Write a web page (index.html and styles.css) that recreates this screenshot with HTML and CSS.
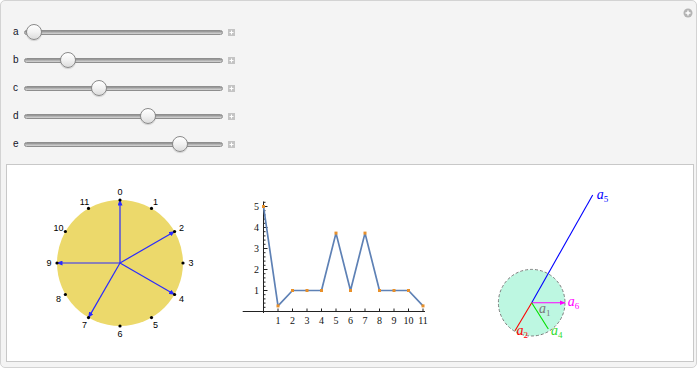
FILE: index.html
```html
<!DOCTYPE html>
<html>
<head>
<meta charset="utf-8">
<link rel="stylesheet" href="styles.css">
</head>
<body>
<div class="manipulate">
  <svg class="opts" width="10" height="10" viewBox="0 0 10 10"><circle cx="5" cy="5" r="4.5" fill="#b4b4b4"/><path d="M5 2.5v5M2.5 5h5" stroke="#fff" stroke-width="1.4"/></svg>
  <div class="controls">
    <div class="row"><span class="lbl">a</span><div class="slider"><div class="track"></div><div class="thumb" style="left:2px"></div></div><svg class="plus" width="7" height="7" viewBox="0 0 7 7"><rect width="7" height="7" fill="#c4c4c4"/><path d="M3.5 1.5v4M1.5 3.5h4" stroke="#fff" stroke-width="1"/></svg></div>
    <div class="row"><span class="lbl">b</span><div class="slider"><div class="track"></div><div class="thumb" style="left:36px"></div></div><svg class="plus" width="7" height="7" viewBox="0 0 7 7"><rect width="7" height="7" fill="#c4c4c4"/><path d="M3.5 1.5v4M1.5 3.5h4" stroke="#fff" stroke-width="1"/></svg></div>
    <div class="row"><span class="lbl">c</span><div class="slider"><div class="track"></div><div class="thumb" style="left:67px"></div></div><svg class="plus" width="7" height="7" viewBox="0 0 7 7"><rect width="7" height="7" fill="#c4c4c4"/><path d="M3.5 1.5v4M1.5 3.5h4" stroke="#fff" stroke-width="1"/></svg></div>
    <div class="row"><span class="lbl">d</span><div class="slider"><div class="track"></div><div class="thumb" style="left:116px"></div></div><svg class="plus" width="7" height="7" viewBox="0 0 7 7"><rect width="7" height="7" fill="#c4c4c4"/><path d="M3.5 1.5v4M1.5 3.5h4" stroke="#fff" stroke-width="1"/></svg></div>
    <div class="row"><span class="lbl">e</span><div class="slider"><div class="track"></div><div class="thumb" style="left:148px"></div></div><svg class="plus" width="7" height="7" viewBox="0 0 7 7"><rect width="7" height="7" fill="#c4c4c4"/><path d="M3.5 1.5v4M1.5 3.5h4" stroke="#fff" stroke-width="1"/></svg></div>
  </div>
  <div class="output">
    <svg class="clock" width="160" height="160" viewBox="0 0 160 160">
      <defs>
        <marker id="ah" markerWidth="6" markerHeight="5" refX="5.5" refY="2.5" orient="auto" markerUnits="userSpaceOnUse">
          <path d="M0 0L6 2.5L0 5z" fill="#2a2aff"/>
        </marker>
      </defs>
      <circle cx="80" cy="83" r="63" fill="#ecd96b"/>
      <g stroke="#2a2aff" stroke-width="1.2" marker-end="url(#ah)">
        <line x1="80" y1="83" x2="80" y2="20"/>
        <line x1="80" y1="83" x2="134.6" y2="51.5"/>
        <line x1="80" y1="83" x2="134.6" y2="114.5"/>
        <line x1="80" y1="83" x2="48.5" y2="137.6"/>
        <line x1="80" y1="83" x2="17" y2="83"/>
      </g>
      <g fill="#000">
        <circle cx="80" cy="20" r="1.6"/><circle cx="111.5" cy="28.4" r="1.6"/><circle cx="134.6" cy="51.5" r="1.6"/>
        <circle cx="143" cy="83" r="1.6"/><circle cx="134.6" cy="114.5" r="1.6"/><circle cx="111.5" cy="137.6" r="1.6"/>
        <circle cx="80" cy="146" r="1.6"/><circle cx="48.5" cy="137.6" r="1.6"/><circle cx="25.4" cy="114.5" r="1.6"/>
        <circle cx="17" cy="83" r="1.6"/><circle cx="25.4" cy="51.5" r="1.6"/><circle cx="48.5" cy="28.4" r="1.6"/>
      </g>
      <g class="clk" text-anchor="middle" dominant-baseline="central">
        <text x="80" y="12">0</text><text x="115.5" y="21.5">1</text><text x="141.5" y="47.5">2</text>
        <text x="151" y="83">3</text><text x="141.5" y="118.5">4</text><text x="115.5" y="144.5">5</text>
        <text x="80" y="154">6</text><text x="44.5" y="144.5">7</text><text x="18.5" y="118.5">8</text>
        <text x="9" y="83">9</text><text x="18.5" y="47.5">10</text><text x="44.5" y="21.5">11</text>
      </g>
    </svg>
    <svg class="plot" width="200" height="160" viewBox="0 0 200 160">
      <g stroke="#222" stroke-width="1" fill="none">
        <line x1="7.7" y1="131.5" x2="190" y2="131.5"/>
        <line x1="28.5" y1="21.5" x2="28.5" y2="133"/>
        <path d="M28.5 110.5h4M28.5 89.5h4M28.5 68.5h4M28.5 47.5h4M28.5 26.5h4"/>
        <path d="M28.5 127.3h2M28.5 123.1h2M28.5 118.9h2M28.5 114.7h2M28.5 106.3h2M28.5 102.1h2M28.5 97.9h2M28.5 93.7h2M28.5 85.3h2M28.5 81.1h2M28.5 76.9h2M28.5 72.7h2M28.5 64.3h2M28.5 60.1h2M28.5 55.9h2M28.5 51.7h2M28.5 43.3h2M28.5 39.1h2M28.5 34.9h2M28.5 30.7h2M28.5 22.3h2"/>
        <path d="M43 131.5v-3M57.5 131.5v-3M72 131.5v-3M86.5 131.5v-3M101 131.5v-3M115.5 131.5v-3M130 131.5v-3M144.5 131.5v-3M159 131.5v-3M173.5 131.5v-3M188 131.5v-3"/>
      </g>
      <polyline fill="none" stroke="#5e81b5" stroke-width="1.7" stroke-linejoin="round" points="28.5,26.5 43,125.9 57.5,110.5 72,110.5 86.5,110.5 101,53.1 115.5,110.5 130,53.1 144.5,110.5 159,110.5 173.5,110.5 188,125.9"/>
      <g fill="#e8902a">
        <rect x="27" y="25" width="3" height="3"/><rect x="41.5" y="124.4" width="3" height="3"/><rect x="56" y="109" width="3" height="3"/>
        <rect x="70.5" y="109" width="3" height="3"/><rect x="85" y="109" width="3" height="3"/><rect x="99.5" y="51.6" width="3" height="3"/>
        <rect x="114" y="109" width="3" height="3"/><rect x="128.5" y="51.6" width="3" height="3"/><rect x="143" y="109" width="3" height="3"/>
        <rect x="157.5" y="109" width="3" height="3"/><rect x="172" y="109" width="3" height="3"/><rect x="186.5" y="124.4" width="3" height="3"/>
      </g>
      <g class="tick" text-anchor="end" dominant-baseline="central">
        <text x="24" y="110.5">1</text><text x="24" y="89.5">2</text><text x="24" y="68.5">3</text><text x="24" y="47.5">4</text><text x="24" y="26.5">5</text>
      </g>
      <g class="tick" text-anchor="middle" dominant-baseline="central">
        <text x="43" y="140">1</text><text x="57.5" y="140">2</text><text x="72" y="140">3</text><text x="86.5" y="140">4</text>
        <text x="101" y="140">5</text><text x="115.5" y="140">6</text><text x="130" y="140">7</text><text x="144.5" y="140">8</text>
        <text x="159" y="140">9</text><text x="173.5" y="140">10</text><text x="188" y="140">11</text>
      </g>
    </svg>
    <svg class="vec" width="140" height="160" viewBox="0 0 140 160">
      <defs>
        <marker id="am" markerWidth="6" markerHeight="5" refX="5.5" refY="2.5" orient="auto" markerUnits="userSpaceOnUse">
          <path d="M0 0L6 2.5L0 5z" fill="#ff00ff"/>
        </marker>
      </defs>
      <circle cx="51.7" cy="122.7" r="33.3" fill="#bdf7e1" stroke="#6f6f6f" stroke-width="0.9" stroke-dasharray="3 2"/>
      <line x1="51.7" y1="122.7" x2="112.7" y2="15" stroke="#0000ff" stroke-width="1.1"/>
      <line x1="51.7" y1="122.7" x2="85" y2="122.7" stroke="#ff00ff" stroke-width="1.1" marker-end="url(#am)"/>
      <line x1="51.7" y1="122.7" x2="35" y2="150.7" stroke="#ff0000" stroke-width="1.1"/>
      <line x1="51.7" y1="122.7" x2="68.3" y2="149" stroke="#00e000" stroke-width="1.1"/>
      <g class="lab">
        <text x="116.7" y="18.5" fill="#0000ff">a<tspan class="sub" dy="3">5</tspan></text>
        <text x="87.7" y="125.5" fill="#ff00ff">a<tspan class="sub" dy="3">6</tspan></text>
        <text x="59" y="132.5" fill="#7a7a7a">a<tspan class="sub" dy="3">1</tspan></text>
        <text x="36.5" y="155" fill="#ff0000">a<tspan class="sub" dy="3">2</tspan></text>
        <text x="71" y="155" fill="#33dd33">a<tspan class="sub" dy="3">4</tspan></text>
      </g>
    </svg>
  </div>
</div>
</body>
</html>
```
FILE: styles.css
```css
html, body {
  margin: 0;
  background: #fff;
  font-family: "Liberation Sans", Arial, sans-serif;
}

.manipulate {
  position: relative;
  width: 697px;
  height: 368px;
  box-sizing: border-box;
  border: 1px solid #d3d3d3;
  border-radius: 5px;
  background: #f4f4f4;
}

.opts {
  position: absolute;
  left: 682px;
  top: 7px;
  display: block;
}

.controls {
  padding: 17px 0 0 12px;
}

.row {
  display: flex;
  align-items: center;
  height: 28px;
}

.lbl {
  width: 11px;
  font-size: 10px;
  line-height: 10px;
  color: #14142a;
}

.slider {
  position: relative;
  width: 199px;
  height: 16px;
  display: flex;
  align-items: center;
}

.track {
  width: 100%;
  height: 5px;
  box-sizing: border-box;
  border-radius: 3px;
  border: 1px solid #8e8e8e;
  background: linear-gradient(#8c8c8c, #b9b9b9 55%, #d6d6d6);
}

.thumb {
  position: absolute;
  top: 0;
  width: 16px;
  height: 16px;
  box-sizing: border-box;
  border-radius: 50%;
  border: 1px solid #8a8a8a;
  background: linear-gradient(#ffffff, #f2f2f2 50%, #dcdcdc);
  box-shadow: 0 1px 1px rgba(0, 0, 0, 0.15);
}

.plus {
  display: block;
  margin-left: 5px;
}

.output {
  margin: 6px 2px 0 5px;
  height: 198px;
  box-sizing: border-box;
  border: 1px solid #c8c8c8;
  background: #fff;
  display: flex;
  align-items: flex-start;
  padding: 15px 0 0 33px;
}

.output svg {
  display: block;
  flex: none;
}

.plot {
  margin-left: 35px;
}

.vec {
  margin-left: 45px;
}

.clk text {
  font-family: "Liberation Sans", Arial, sans-serif;
  font-size: 9px;
  fill: #000;
}

.tick text {
  font-family: "Liberation Serif", "Times New Roman", serif;
  font-size: 10px;
  fill: #111;
}

.lab text {
  font-family: "Liberation Serif", "Times New Roman", serif;
  font-style: italic;
  font-size: 14px;
}

.lab .sub {
  font-size: 9px;
  font-style: normal;
}
```
